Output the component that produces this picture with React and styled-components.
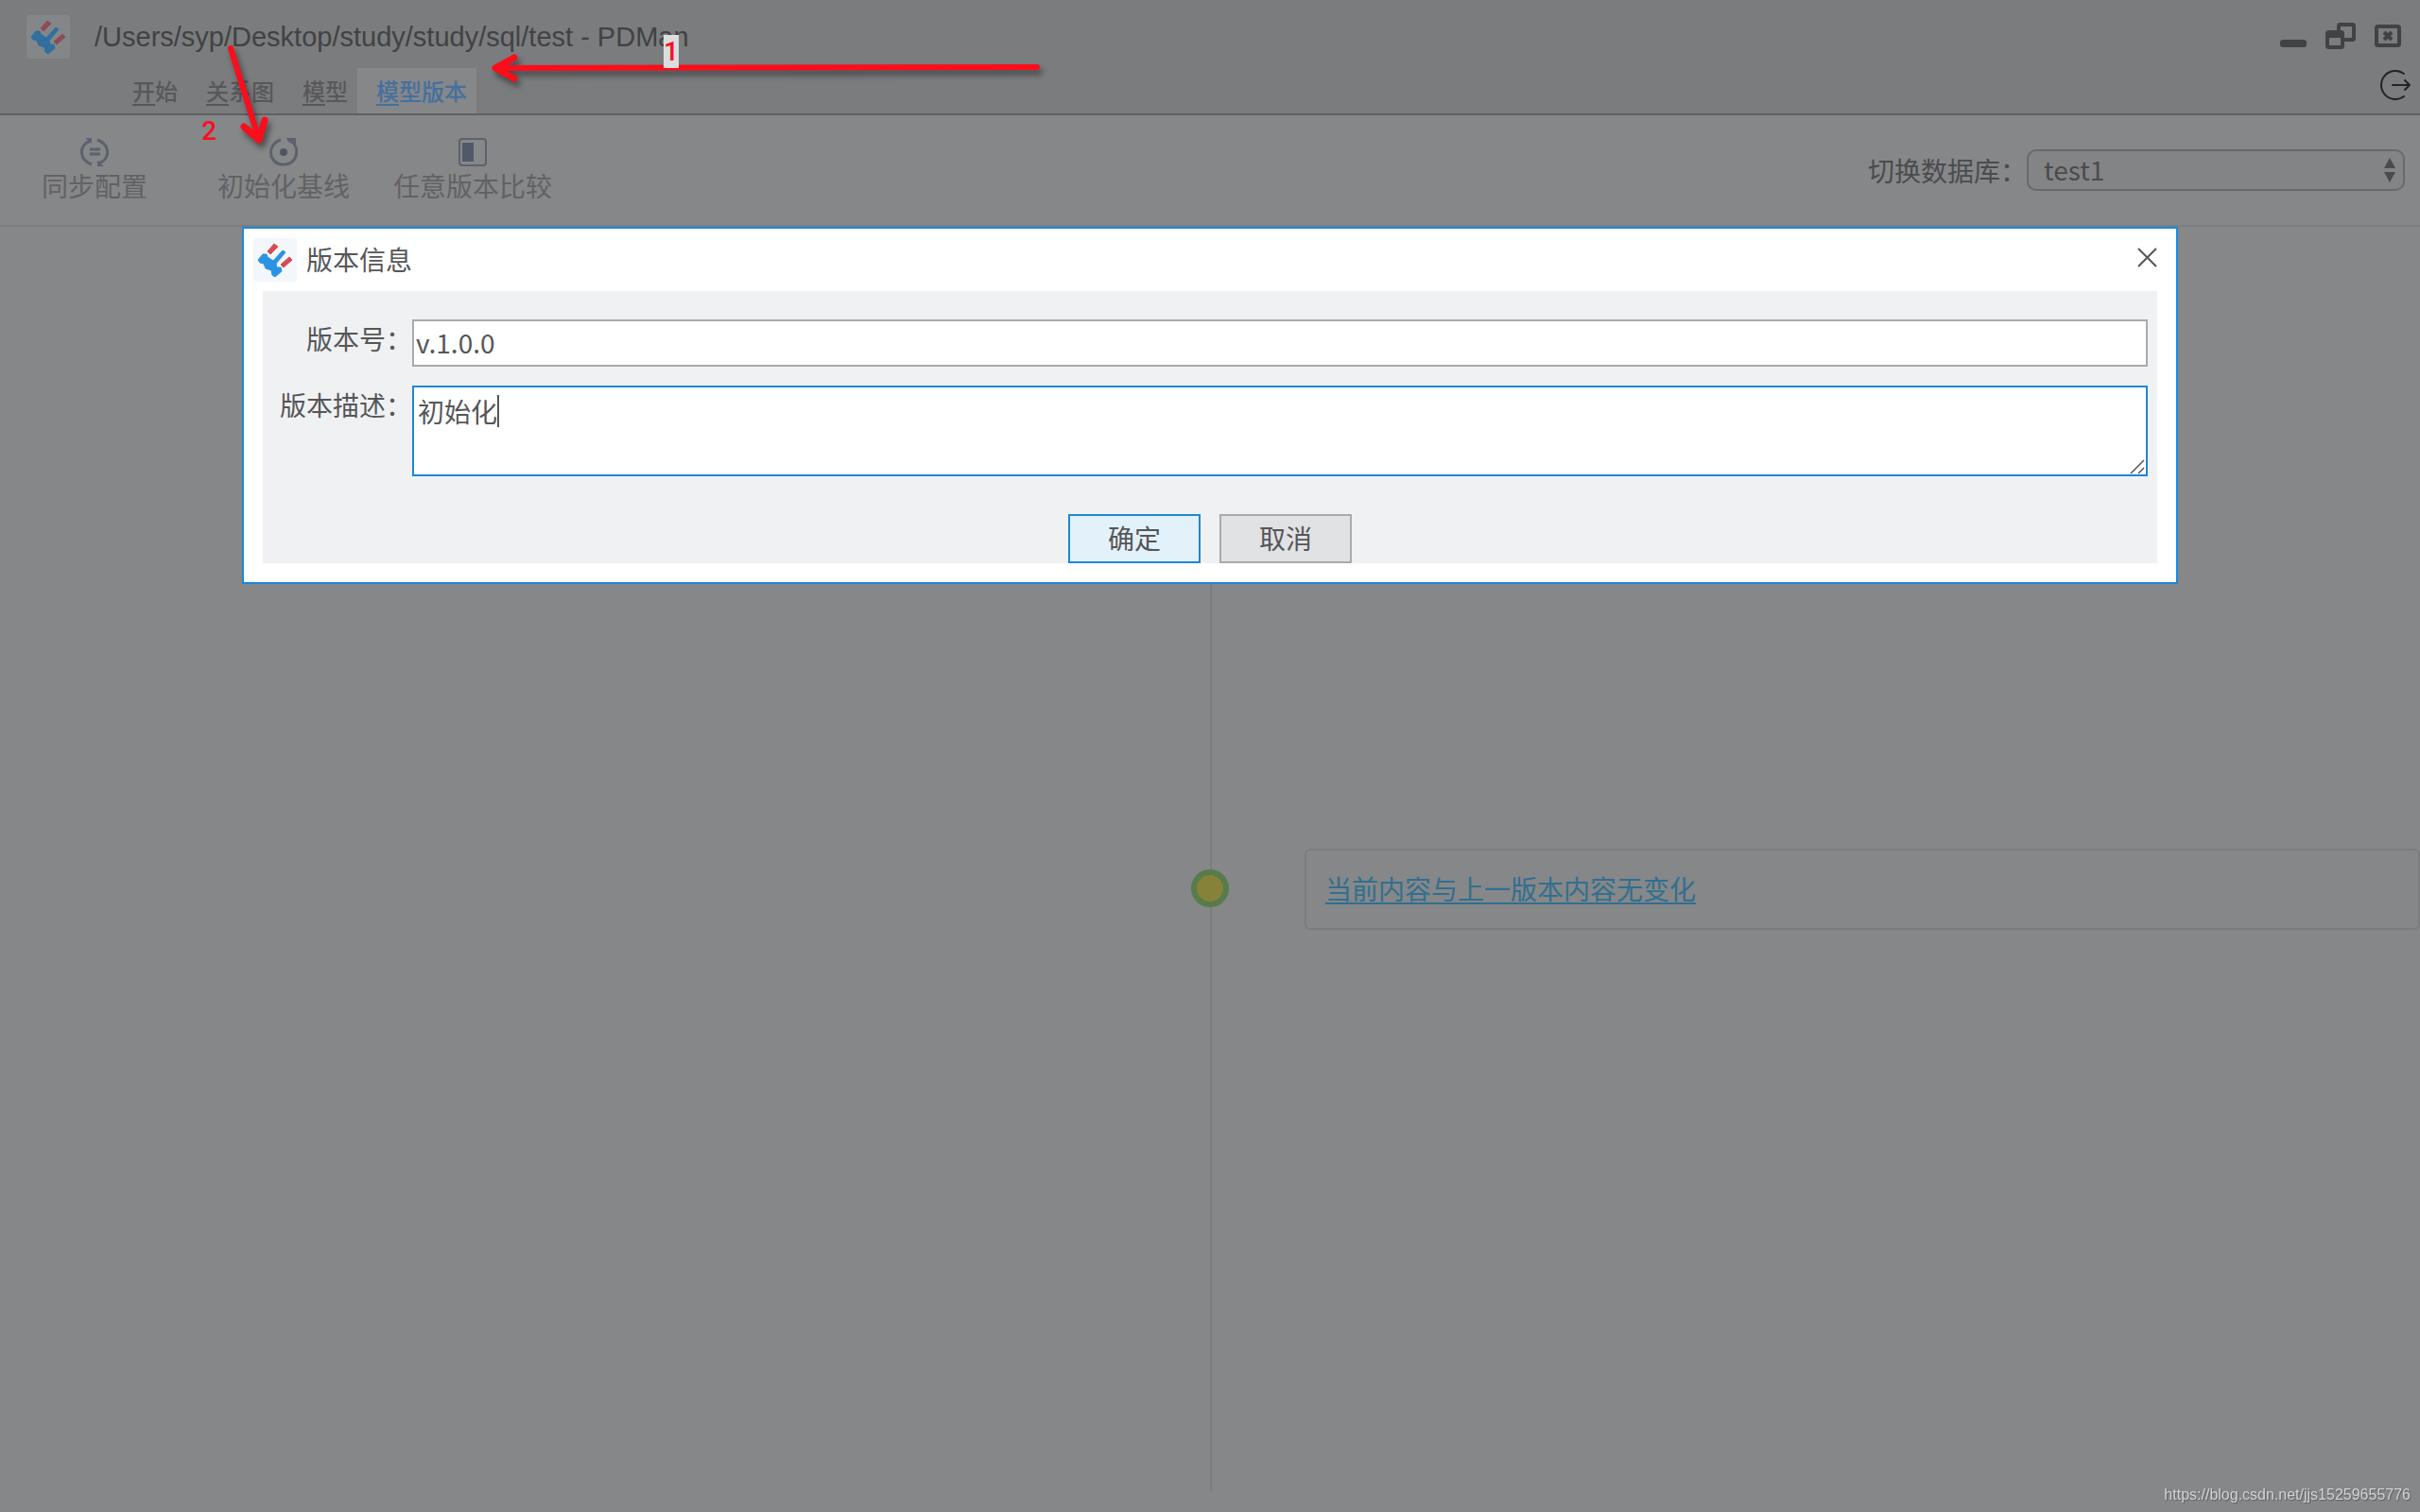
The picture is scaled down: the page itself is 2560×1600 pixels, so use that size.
import React, { useState } from 'react';
import styled, { createGlobalStyle } from 'styled-components';

const GlobalStyle = createGlobalStyle`
  * {
    box-sizing: border-box;
  }

  body {
    margin: 0;
    background: #868789;
    color: #4a4b4d;
    font-family: 'Noto Sans CJK SC', 'Noto Sans', sans-serif;
    font-size: 28px;
    line-height: 40px;
  }

  button, input, select, textarea {
    font: inherit;
    color: inherit;
  }
`;

const Page = styled.div`
  display: flex;
  flex-direction: column;
  min-height: 100vh;
`;

const Header = styled.header`
  display: flex;
  justify-content: space-between;
  height: 122px;
  background: #7b7c7e;
  border-bottom: 2px solid #5f6062;
`;

const TitleRow = styled.div`
  display: flex;
  align-items: center;
  gap: 26px;
  height: 72px;
  padding: 6px 28px 0;
`;

const Title = styled.h1`
  margin: 0;
  color: #414244;
  font-family: 'Liberation Sans', sans-serif;
  font-size: 29px;
  font-weight: 400;
`;

const Menu = styled.nav`
  display: flex;
  padding-left: 120px;
`;

const MenuItem = styled.button`
  height: 48px;
  padding: 0 10px 0 20px;
  border: none;
  background: ${(props) => (props.$active ? '#868789' : 'transparent')};
  color: ${(props) => (props.$active ? '#43709f' : '#57585a')};
  font-size: 24px;
  font-weight: 500;
  line-height: 48px;
`;

const FirstLetter = styled.span`
  text-decoration: underline;
  text-decoration-thickness: 2px;
  text-underline-offset: 4px;
`;

const HeaderSide = styled.div`
  display: flex;
  flex-direction: column;
  align-items: flex-end;
  gap: 22px;
  padding: 24px 10px 0 0;
`;

const WindowControls = styled.div`
  display: flex;
  gap: 20px;
  padding-right: 10px;
`;

const IconButton = styled.button`
  display: flex;
  padding: 0;
  border: none;
  background: none;
`;

const Toolbar = styled.div`
  display: flex;
  align-items: center;
  justify-content: space-between;
  height: 118px;
  padding-right: 16px;
  border-bottom: 2px solid #7d7e80;
`;

const Tools = styled.div`
  display: flex;
  padding-top: 2px;
`;

const Tool = styled.button`
  display: flex;
  flex-direction: column;
  align-items: center;
  width: 200px;
  padding: 0;
  border: none;
  background: none;
  color: #616264;
`;

const DbLabel = styled.label`
  display: flex;
  align-items: center;
`;

const SelectWrap = styled.span`
  position: relative;
  display: flex;
`;

const Select = styled.select`
  appearance: none;
  width: 400px;
  height: 44px;
  padding: 0 16px 2px;
  border: 2px solid #68696b;
  border-radius: 10px;
  background: #838486;
  line-height: 38px;
`;

const SelectArrows = styled.svg`
  position: absolute;
  top: 8px;
  right: 9px;
  pointer-events: none;
`;

const Timeline = styled.main`
  display: grid;
  grid-template-columns: 1fr 1fr;
  flex: 1;
  padding-bottom: 22px;
`;

const TimelineTrack = styled.div`
  grid-column: 2;
  padding: 658px 0 0 98px;
  border-left: 2px solid #7b7c7e;
`;

const Version = styled.div`
  position: relative;
  padding: 20px 20px 22px;
  border: 2px solid #7b7c7e;
  border-radius: 6px;
`;

const Dot = styled.span`
  position: absolute;
  top: 20px;
  left: -122px;
  width: 40px;
  height: 40px;
  border: 6px solid #577b4a;
  border-radius: 50%;
  background: #86823a;
`;

const VersionLink = styled.a`
  display: block;
  color: #306f8f;
  text-decoration: underline;
  text-decoration-thickness: 2px;
  text-underline-offset: 3px;
`;

const Backdrop = styled.div`
  position: fixed;
  inset: 0;
  display: flex;
  align-items: flex-start;
  justify-content: center;
  padding-top: 15vh;
`;

const Dialog = styled.section`
  width: 80%;
  padding: 0 20px 20px;
  border: 2px solid #1c87d9;
  background: #fff;
`;

const DialogHeader = styled.div`
  display: flex;
  align-items: center;
  justify-content: space-between;
  height: 66px;
`;

const DialogTitle = styled.h2`
  display: flex;
  align-items: center;
  gap: 10px;
  margin: 0 0 0 -10px;
  color: #555658;
  font-size: 28px;
  font-weight: 400;

  span {
    padding-bottom: 2px;
  }
`;

const Form = styled.form`
  display: flex;
  flex-direction: column;
  gap: 20px;
  padding: 30px 10px 0;
  background: #f0f1f3;
  color: #555658;
`;

const Field = styled.div`
  display: grid;
  grid-template-columns: 148px 1fr;
  align-items: start;
`;

const FieldLabel = styled.label`
  text-align: right;
`;

const TextInput = styled.input`
  width: 100%;
  height: 50px;
  padding: 0 2px 2px;
  border: 2px solid #a9aaac;
  border-radius: 0;
  background: #fff;
  outline: none;
`;

const AreaWrap = styled.div`
  position: relative;
  display: flex;
`;

const TextArea = styled.textarea`
  width: 100%;
  height: 96px;
  padding: 5px 4px;
  border: 2px solid #1c87d9;
  border-radius: 0;
  background: #fff;
  outline: none;
  resize: none;
  caret-color: transparent;
`;

const Caret = styled.span`
  position: absolute;
  top: 10px;
  left: 90px;
  width: 2px;
  height: 34px;
  background: #555658;
`;

const Grip = styled.svg`
  position: absolute;
  right: 3px;
  bottom: 2px;
  pointer-events: none;
`;

const Actions = styled.div`
  display: flex;
  justify-content: center;
  gap: 20px;
  padding-top: 20px;
`;

const ActionButton = styled.button`
  width: 140px;
  height: 52px;
  padding: 0 0 2px;
  border: 2px solid ${(props) => (props.$primary ? '#1c87d9' : '#a9aaac')};
  background: ${(props) => (props.$primary ? '#e3f1fb' : '#e1e2e4')};
`;

const Marks = styled.svg`
  position: absolute;
  top: 0;
  left: 0;
  pointer-events: none;
  filter: drop-shadow(3px 5px 3px rgba(0, 0, 0, 0.45));
`;

const MarkNumber = styled.span`
  position: absolute;
  top: ${(props) => props.$top}px;
  left: ${(props) => props.$left}px;
  background: ${(props) => (props.$boxed ? '#dcdddf' : 'transparent')};
  color: #fc0d1b;
  font-family: Roboto, sans-serif;
  font-size: 28px;
  font-weight: 500;
  line-height: 35px;
`;

const Watermark = styled.span`
  position: fixed;
  right: 10px;
  bottom: 8px;
  color: #d2d3d4;
  font-family: 'Liberation Sans', sans-serif;
  font-size: 16px;
  line-height: 20px;
  text-shadow: 1px 1px 1px #5b5c5e;
`;

const Logo = ({ dimmed }) => (
  <svg width="46" height="46" viewBox="0 0 46 46">
    <rect width="46" height="46" rx="4" fill={dimmed ? '#838789' : '#f3f7fb'} />
    <g strokeWidth="1" strokeLinejoin="round">
      <path
        d="M22 6l4 3-8 8-3-3zM38 20l3 3-9 8-3-3z"
        fill={dimmed ? '#8f4c54' : '#d84b53'}
        stroke={dimmed ? '#8f4c54' : '#d84b53'}
      />
      <path
        d="M5 23l5-6h4l1 3 6 4 10-11 3 2-10 12 1 4h4l1 4-7 6-3-2-1-5-6-2-2-5-4-1z"
        fill={dimmed ? '#326f9e' : '#2b93e6'}
        stroke={dimmed ? '#326f9e' : '#2b93e6'}
      />
    </g>
  </svg>
);

const SyncIcon = () => (
  <svg width="30" height="30" viewBox="0 0 30 30" fill="none" stroke="#5b626d" strokeWidth="3">
    <path d="M11 3C-2 7-2 23 12 28M18 2c14 5 14 21 1 25" />
    <path d="M5 0h7v6zM25 30h-7v-6z" fill="#5b626d" stroke="none" />
    <path d="M10 12h11M10 17h11" />
  </svg>
);

const BaselineIcon = () => (
  <svg width="30" height="30" viewBox="0 0 30 30" fill="none" stroke="#5b626d" strokeWidth="3">
    <path d="M12 2C-2 6-2 25 12 28h6c13-3 14-20 4-25" />
    <path d="M18 0h10v8l-8-4z" fill="#5b626d" stroke="none" />
    <circle cx="15" cy="15" r="4" fill="#4f5661" stroke="none" />
  </svg>
);

const CompareIcon = () => (
  <svg width="30" height="30" viewBox="0 0 30 30">
    <rect x="1" y="1" width="28" height="28" rx="3" fill="none" stroke="#5b626d" strokeWidth="2" />
    <rect x="4" y="5" width="12" height="20" fill="#525966" />
  </svg>
);

const menus = ['开始', '关系图', '模型', '模型版本'];

const tools = [
  { name: '同步配置', icon: <SyncIcon /> },
  { name: '初始化基线', icon: <BaselineIcon /> },
  { name: '任意版本比较', icon: <CompareIcon /> },
];

const VersionDialog = () => {
  const [version, setVersion] = useState('v.1.0.0');
  const [desc, setDesc] = useState('初始化');

  return (
    <Backdrop>
      <Dialog role="dialog" aria-labelledby="dialog-title">
        <DialogHeader>
          <DialogTitle id="dialog-title">
            <Logo />
            <span>版本信息</span>
          </DialogTitle>
          <IconButton type="button" aria-label="关闭">
            <svg width="22" height="32" viewBox="0 0 22 32" stroke="#555658" strokeWidth="2">
              <path d="M2 4l19 19M21 4L2 23" />
            </svg>
          </IconButton>
        </DialogHeader>
        <Form onSubmit={(e) => e.preventDefault()}>
          <Field>
            <FieldLabel htmlFor="version">版本号：</FieldLabel>
            <TextInput id="version" value={version} onChange={(e) => setVersion(e.target.value)} />
          </Field>
          <Field>
            <FieldLabel htmlFor="desc">版本描述：</FieldLabel>
            <AreaWrap>
              <TextArea id="desc" value={desc} onChange={(e) => setDesc(e.target.value)} />
              <Caret />
              <Grip width="16" height="16" viewBox="0 0 16 16" stroke="#555658" strokeWidth="1.5">
                <path d="M1 15L15 1M9 15l6-6" />
              </Grip>
            </AreaWrap>
          </Field>
          <Actions>
            <ActionButton type="submit" $primary>确定</ActionButton>
            <ActionButton type="button">取消</ActionButton>
          </Actions>
        </Form>
      </Dialog>
    </Backdrop>
  );
};

const App = () => {
  const [active, setActive] = useState('模型版本');

  return (
    <>
      <GlobalStyle />
      <Page>
        <Header>
          <div>
            <TitleRow>
              <Logo dimmed />
              <Title>/Users/syp/Desktop/study/study/sql/test - PDMan</Title>
            </TitleRow>
            <Menu>
              {menus.map((name) => (
                <MenuItem key={name} type="button" $active={name === active} onClick={() => setActive(name)}>
                  <FirstLetter>{name[0]}</FirstLetter>
                  {name.slice(1)}
                </MenuItem>
              ))}
            </Menu>
          </div>
          <HeaderSide>
            <WindowControls>
              <IconButton type="button" aria-label="最小化">
                <svg width="28" height="28" viewBox="0 0 28 28">
                  <rect y="18" width="28" height="8" rx="3" fill="#414244" />
                </svg>
              </IconButton>
              <IconButton type="button" aria-label="还原">
                <svg width="32" height="28" viewBox="0 0 32 28" fill="none" stroke="#414244" strokeWidth="4">
                  <path d="M14 10V3.500Q14 2 15.500 2H28.500Q30 2 30 3.500V16.500Q30 18 28.500 18H18" />
                  <rect x="2" y="10" width="16" height="16" rx="1.500" />
                  <path d="M2 13h16" strokeWidth="6" />
                </svg>
              </IconButton>
              <IconButton type="button" aria-label="关闭窗口">
                <svg width="28" height="28" viewBox="0 0 28 28" fill="none" stroke="#414244" strokeWidth="4">
                  <rect x="2" y="4" width="24" height="20" rx="1.500" />
                  <path d="M10 10l8 8M18 10l-8 8" />
                </svg>
              </IconButton>
            </WindowControls>
            <IconButton type="button" aria-label="退出">
              <svg
                width="32"
                height="32"
                viewBox="0 0 32 32"
                fill="none"
                stroke="#222325"
                strokeWidth="2"
                strokeLinecap="round"
                strokeLinejoin="round"
              >
                <path d="M25 4A15 15 0 1 0 25 28" />
                <path d="M13 16h18M26 11l5 5-5 5" />
              </svg>
            </IconButton>
          </HeaderSide>
        </Header>

        <Toolbar>
          <Tools>
            {tools.map((tool) => (
              <Tool key={tool.name} type="button">
                {tool.icon}
                {tool.name}
              </Tool>
            ))}
          </Tools>
          <DbLabel>
            切换数据库：
            <SelectWrap>
              <Select defaultValue="test1">
                <option>test1</option>
              </Select>
              <SelectArrows width="14" height="28" viewBox="0 0 14 28" fill="#4a4b4d">
                <path d="M7 1l6 11H1zM7 27l6-11H1z" />
              </SelectArrows>
            </SelectWrap>
          </DbLabel>
        </Toolbar>

        <Timeline>
          <TimelineTrack>
            <Version>
              <Dot />
              <VersionLink href="#">当前内容与上一版本内容无变化</VersionLink>
            </Version>
          </TimelineTrack>
        </Timeline>
      </Page>

      <VersionDialog />

      <Marks width="1120" height="180" fill="none" stroke="#fc0d1b" strokeLinecap="round" strokeLinejoin="round">
        <path d="M1097 71L524 72" strokeWidth="6" />
        <path d="M544 61L524 72l20 11" strokeWidth="7" />
        <path d="M244 51l30 97" strokeWidth="6" />
        <path d="M258 134l16 14 6-21" strokeWidth="7" />
      </Marks>
      <MarkNumber $top={37} $left={702} $boxed>1</MarkNumber>
      <MarkNumber $top={121} $left={213}>2</MarkNumber>
      <Watermark>https://blog.csdn.net/jjs15259655776</Watermark>
    </>
  );
};

export default App;
